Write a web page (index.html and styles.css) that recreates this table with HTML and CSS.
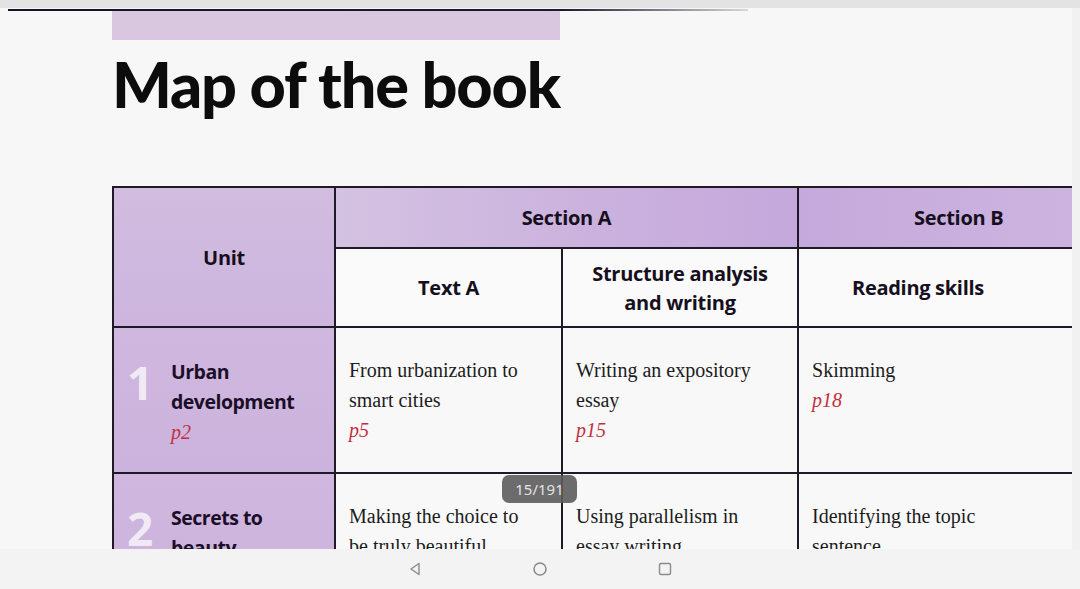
FILE: index.html
```html
<!DOCTYPE html>
<html lang="en">
<head>
<meta charset="utf-8">
<title>Map of the book</title>
<link rel="stylesheet" href="styles.css">
</head>
<body>
<div class="screen">
  <div class="statusbar"></div>
  <div class="viewer">
    <div class="page">
      <div class="rule"></div>
      <div class="band"></div>
      <h1 class="title">Map of the book</h1>
      <table class="map">
        <colgroup>
          <col class="c-unit"><col class="c-text"><col class="c-struct"><col class="c-b">
        </colgroup>
        <thead>
          <tr class="h1row">
            <th rowspan="2" class="unit-head">Unit</th>
            <th colspan="2" class="sec-a">Section A</th>
            <th class="sec-b">Section B</th>
          </tr>
          <tr class="h2row">
            <th>Text A</th>
            <th>Structure analysis<br>and writing</th>
            <th class="rs">Reading skills</th>
          </tr>
        </thead>
        <tbody>
          <tr class="r1">
            <td class="unit">
              <div class="unit-inner">
                <span class="num">1</span>
                <div class="unit-text"><b>Urban<br>development</b><i class="pg">p2</i></div>
              </div>
            </td>
            <td class="cell">From urbanization to<br>smart cities<i class="pg">p5</i></td>
            <td class="cell">Writing an expository<br>essay<i class="pg">p15</i></td>
            <td class="cell">Skimming<i class="pg">p18</i></td>
          </tr>
          <tr class="r2">
            <td class="unit">
              <div class="unit-inner">
                <span class="num">2</span>
                <div class="unit-text"><b>Secrets to<br>beauty</b></div>
              </div>
            </td>
            <td class="cell">Making the choice to<br>be truly beautiful</td>
            <td class="cell">Using parallelism in<br>essay writing</td>
            <td class="cell">Identifying the topic<br>sentence</td>
          </tr>
        </tbody>
      </table>
    </div>
    <div class="badge">15/191</div>
  </div>
  <nav class="navbar">
    <svg class="nav-ic" width="16" height="16" viewBox="0 0 16 16"><path d="M12 2.5 L4 8 L12 13.5 Z" fill="none" stroke="#8a8a8a" stroke-width="1.4" stroke-linejoin="round"/></svg>
    <svg class="nav-ic" width="16" height="16" viewBox="0 0 16 16"><circle cx="8" cy="8" r="6" fill="none" stroke="#8a8a8a" stroke-width="1.5"/></svg>
    <svg class="nav-ic" width="16" height="16" viewBox="0 0 16 16"><rect x="2.5" y="2.5" width="11" height="11" rx="1.5" fill="none" stroke="#8a8a8a" stroke-width="1.4"/></svg>
  </nav>
</div>
</body>
</html>
```

FILE: styles.css
```css
* { box-sizing: border-box; }
html, body { margin: 0; padding: 0; }
body { width: 1080px; height: 589px; overflow: hidden; background: #f4f4f4; font-family: "Open Sans", "Liberation Sans", sans-serif; }

.screen { display: flex; flex-direction: column; height: 589px; }
.statusbar { height: 8px; background: #e3e3e3; flex: none; }
.viewer { flex: 1; position: relative; overflow: hidden; background: #f1f1f1; }
.page { width: 1072px; height: 100%; overflow: hidden; background: #f7f7f7; padding-top: 1px; }

.rule { height: 2px; margin-left: 8px; width: 740px; background: linear-gradient(90deg, #141428 0%, #1c1c30 75%, rgba(40,40,60,0.15) 100%); }
.band { margin-left: 112px; width: 448px; height: 29px; background: #d9c7e0; }

.title {
  margin: 5px 0 0 112px;
  font-family: "Lato", "Open Sans", sans-serif;
  font-weight: 900;
  font-size: 63px;
  line-height: 78px;
  letter-spacing: -1.2px;
  color: #0c0c0c;
}

.map {
  margin: 63px 0 0 112px;
  border-collapse: collapse;
  table-layout: fixed;
  width: 1013px;
}
.c-unit { width: 222px; }
.c-text { width: 227px; }
.c-struct { width: 236px; }
.c-b { width: 328px; }

.map th, .map td { border: 2px solid #1e1a26; padding: 0; }
.map th {
  font-weight: 700;
  font-size: 20px;
  letter-spacing: -0.3px;
  color: #160f20;
  line-height: 29px;
  text-align: center;
}
.h1row { height: 61px; }
.h2row { height: 79px; }
.map th.unit-head { background: linear-gradient(180deg, #d1bde0 0%, #cdb5de 100%); }
.map th.sec-a { background: linear-gradient(90deg, #d4c2e2 0%, #cbb2de 55%, #c5a8dc 100%); }
.map th.sec-b { background: linear-gradient(90deg, #c6a9dc 0%, #cdb6e0 100%); text-align: left; padding-left: 115px; }
.h2row th { background: #fafafa; }
.map .h2row th.rs { text-align: left; padding-left: 53px; }

.r1 { height: 146px; }
.r2 { height: 120px; }
.map td { vertical-align: top; }
.map td.unit { background: linear-gradient(180deg, #cfb7df 0%, #ccb3dd 100%); padding: 29px 0 0 13px; }
.unit-inner { display: flex; align-items: flex-start; gap: 27px; }
.num { font-family: "Open Sans", sans-serif; font-weight: 700; font-size: 46px; line-height: 1; color: rgba(255,255,255,0.72); margin-top: 2px; width: 17px; }
.unit-text b { display: block; font-size: 19.5px; line-height: 30px; font-weight: 700; letter-spacing: -0.5px; color: #1b0f28; }
.unit-text .pg, .cell .pg { display: block; }
.map td.cell {
  background: #f8f8f8;
  padding: 27px 10px 0 13px;
  font-family: "Liberation Serif", "Times New Roman", serif;
  font-size: 20px;
  line-height: 30px;
  color: #1c1c1c;
}
.pg { font-family: "Liberation Serif", serif; font-style: italic; font-size: 20px; line-height: 30px; color: #c2303f; }

.badge {
  position: absolute;
  left: 502px; top: 467px;
  width: 75px; height: 28px;
  border-radius: 7px;
  background: rgba(92,92,92,0.9);
  color: #e4e4e4;
  font-family: "Noto Sans", sans-serif;
  font-size: 15px;
  line-height: 28px;
  text-align: center;
}

.navbar { height: 40px; flex: none; background: #f3f3f3; display: flex; justify-content: center; align-items: center; gap: 109px; }
.nav-ic { display: block; }
```
